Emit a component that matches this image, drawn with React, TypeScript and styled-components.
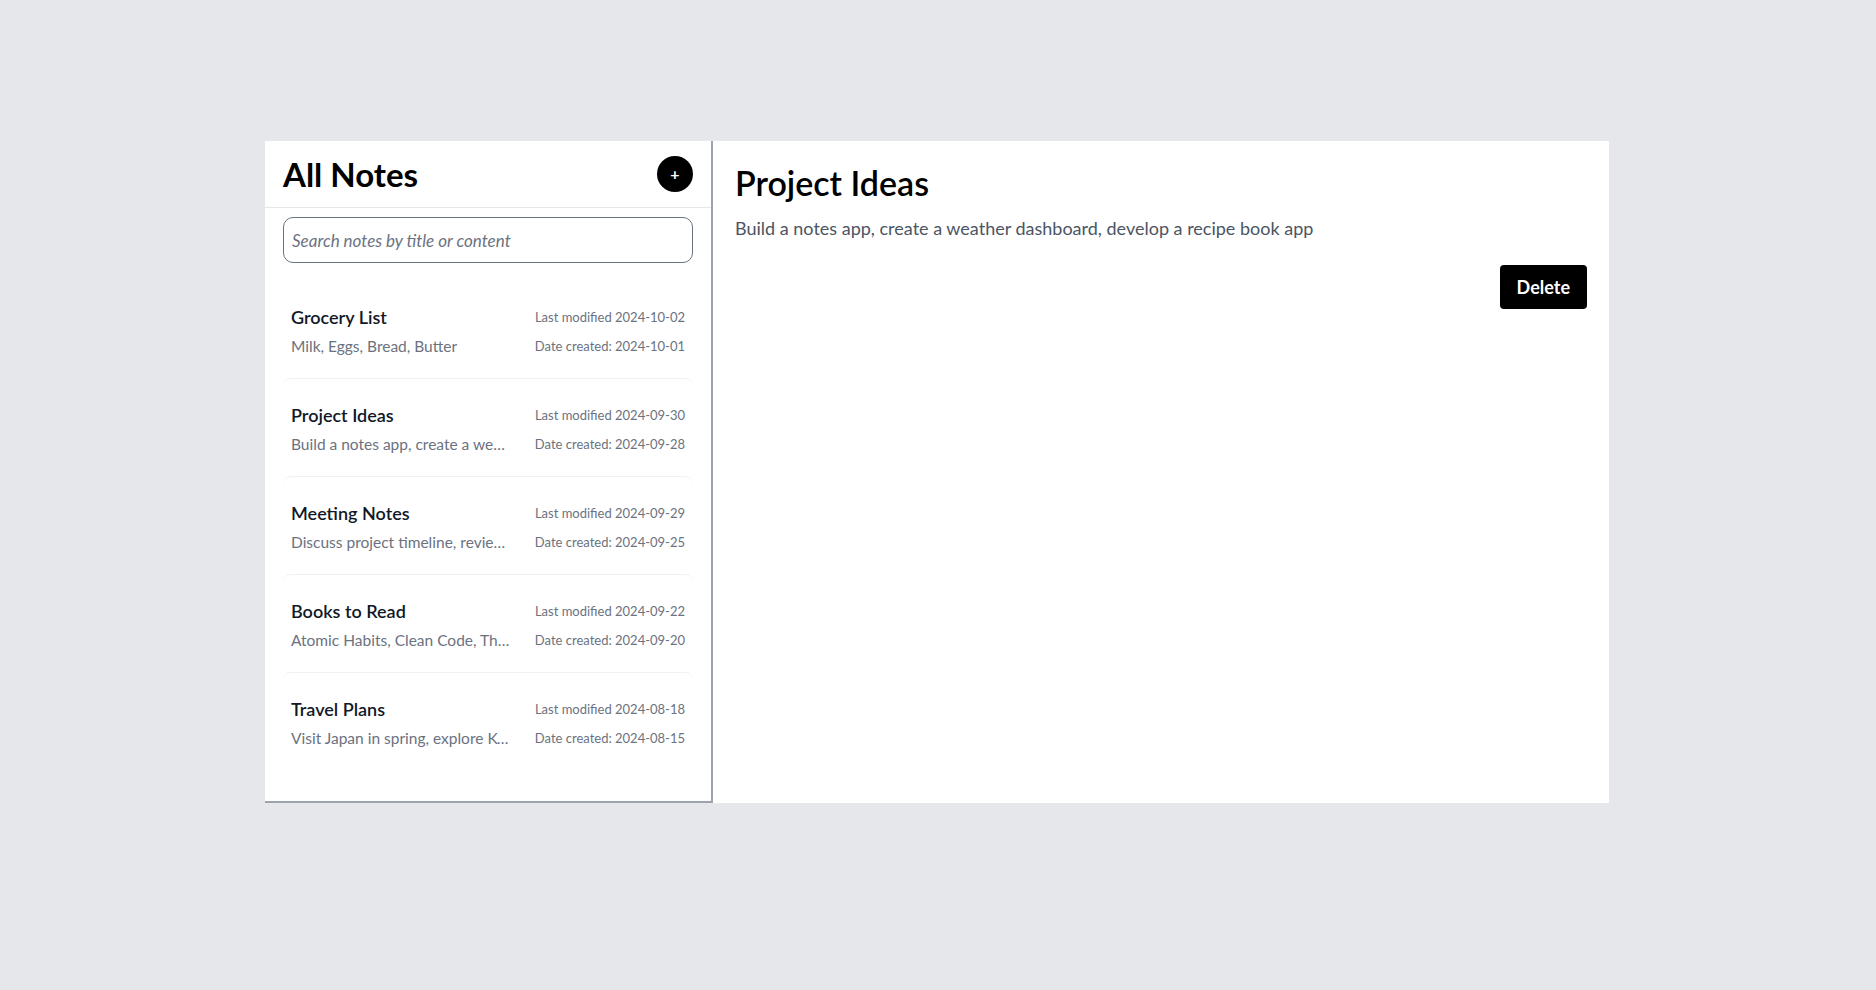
import React from "react"
import styled, { createGlobalStyle } from "styled-components"

const GlobalStyle = createGlobalStyle`
  body {
    margin: 0;
    background: #e5e7eb;
    font-family: "Segoe UI", Lato, "Noto Sans", sans-serif;
    color: #111827;
  }
`

const Page = styled.div`
  min-height: 990px;
  padding: 141px 2px 0 0;
  box-sizing: border-box;
`

const Card = styled.div`
  width: 1344px;
  height: 662px;
  margin: 0 auto;
  display: flex;
  background: #fff;
`

const Sidebar = styled.aside`
  width: 448px;
  flex-shrink: 0;
  box-sizing: border-box;
  border-right: 2px solid #9ca3af;
  border-bottom: 2px solid #9ca3af;
  display: flex;
  flex-direction: column;
`

const SidebarHeader = styled.header`
  height: 67px;
  box-sizing: border-box;
  padding: 0 18px;
  display: flex;
  align-items: center;
  justify-content: space-between;
  border-bottom: 1px solid #e5e7eb;
`

const SidebarTitle = styled.h1`
  margin: 0;
  font-size: 33px;
  line-height: 42px;
  font-weight: 700;
  color: #000;
`

const AddButton = styled.button`
  width: 36px;
  height: 36px;
  border-radius: 50%;
  border: none;
  background: #000;
  color: #fff;
  font-family: inherit;
  font-size: 16px;
  font-weight: 700;
  line-height: 1;
  padding: 0;
  display: flex;
  align-items: center;
  justify-content: center;
  cursor: pointer;
`

const SearchWrap = styled.div`
  padding: 9px 18px 0;
`

const SearchInput = styled.input`
  width: 100%;
  height: 46px;
  box-sizing: border-box;
  border: 1px solid #6b7280;
  border-radius: 10px;
  padding: 0 8px;
  font-family: inherit;
  font-size: 17px;
  color: #111827;
  outline: none;

  &::placeholder {
    font-style: italic;
    color: #6b7280;
  }
`

const NoteList = styled.ul`
  list-style: none;
  margin: 17px 0 0;
  padding: 0 18px;
`

const NoteItem = styled.li`
  display: flex;
  gap: 24px;
  padding: 22px 8px 20px;
  border-top: 1px solid transparent;
  border-radius: 8px;
  cursor: pointer;

  & + & {
    border-top-color: #f0f1f3;
  }
`

const NoteText = styled.div`
  flex: 1;
  min-width: 0;
`

const NoteTitle = styled.div`
  font-size: 18px;
  line-height: 28px;
  font-weight: 600;
  color: #111827;
`

const NoteSnippet = styled.div`
  margin-top: 3px;
  font-size: 15.5px;
  line-height: 24px;
  color: #6b7280;
  white-space: nowrap;
  overflow: hidden;
  text-overflow: ellipsis;
`

const NoteDates = styled.div`
  flex-shrink: 0;
  text-align: right;
  font-size: 13px;
  color: #6b7280;
`

const DateLine = styled.div<{ $first?: boolean }>`
  line-height: ${({ $first }) => ($first ? "28px" : "24px")};
  margin-top: ${({ $first }) => ($first ? "0" : "3px")};
`

const Editor = styled.main`
  flex: 1;
  padding: 22px;
`

const NoteHeading = styled.h2`
  margin: 0 0 11px;
  font-size: 34px;
  line-height: 40px;
  font-weight: 600;
  color: #000;
`

const NoteBody = styled.p`
  margin: 0;
  font-size: 18px;
  line-height: 28px;
  color: #4b5563;
`

const Actions = styled.div`
  display: flex;
  justify-content: flex-end;
  margin-top: 23px;
`

const DeleteButton = styled.button`
  height: 44px;
  padding: 0 17px;
  border: none;
  border-radius: 4px;
  background: #000;
  color: #fff;
  font-family: inherit;
  font-size: 18px;
  font-weight: 700;
  cursor: pointer;
`

interface Note {
  id: number
  title: string
  content: string
  modified: string
  created: string
}

const notes: Note[] = [
  {
    id: 1,
    title: "Grocery List",
    content: "Milk, Eggs, Bread, Butter",
    modified: "2024-10-02",
    created: "2024-10-01",
  },
  {
    id: 2,
    title: "Project Ideas",
    content:
      "Build a notes app, create a weather dashboard, develop a recipe book app",
    modified: "2024-09-30",
    created: "2024-09-28",
  },
  {
    id: 3,
    title: "Meeting Notes",
    content: "Discuss project timeline, review budget, assign tasks",
    modified: "2024-09-29",
    created: "2024-09-25",
  },
  {
    id: 4,
    title: "Books to Read",
    content: "Atomic Habits, Clean Code, The Pragmatic Programmer",
    modified: "2024-09-22",
    created: "2024-09-20",
  },
  {
    id: 5,
    title: "Travel Plans",
    content: "Visit Japan in spring, explore Kyoto temples",
    modified: "2024-08-18",
    created: "2024-08-15",
  },
]

const App: React.FC = () => {
  const [selectedId, setSelectedId] = React.useState(2)
  const [query, setQuery] = React.useState("")

  const visible = notes.filter(
    (n) =>
      n.title.toLowerCase().includes(query.toLowerCase()) ||
      n.content.toLowerCase().includes(query.toLowerCase())
  )
  const selected = notes.find((n) => n.id === selectedId)

  return (
    <Page>
      <GlobalStyle />
      <Card>
        <Sidebar>
          <SidebarHeader>
            <SidebarTitle>All Notes</SidebarTitle>
            <AddButton aria-label="Add note">+</AddButton>
          </SidebarHeader>
          <SearchWrap>
            <SearchInput
              placeholder="Search notes by title or content"
              value={query}
              onChange={(e) => setQuery(e.target.value)}
            />
          </SearchWrap>
          <NoteList>
            {visible.map((note) => (
              <NoteItem key={note.id} onClick={() => setSelectedId(note.id)}>
                <NoteText>
                  <NoteTitle>{note.title}</NoteTitle>
                  <NoteSnippet>{note.content}</NoteSnippet>
                </NoteText>
                <NoteDates>
                  <DateLine $first>Last modified {note.modified}</DateLine>
                  <DateLine>Date created: {note.created}</DateLine>
                </NoteDates>
              </NoteItem>
            ))}
          </NoteList>
        </Sidebar>
        <Editor>
          {selected && (
            <>
              <NoteHeading>{selected.title}</NoteHeading>
              <NoteBody>{selected.content}</NoteBody>
              <Actions>
                <DeleteButton>Delete</DeleteButton>
              </Actions>
            </>
          )}
        </Editor>
      </Card>
    </Page>
  )
}

export default App
